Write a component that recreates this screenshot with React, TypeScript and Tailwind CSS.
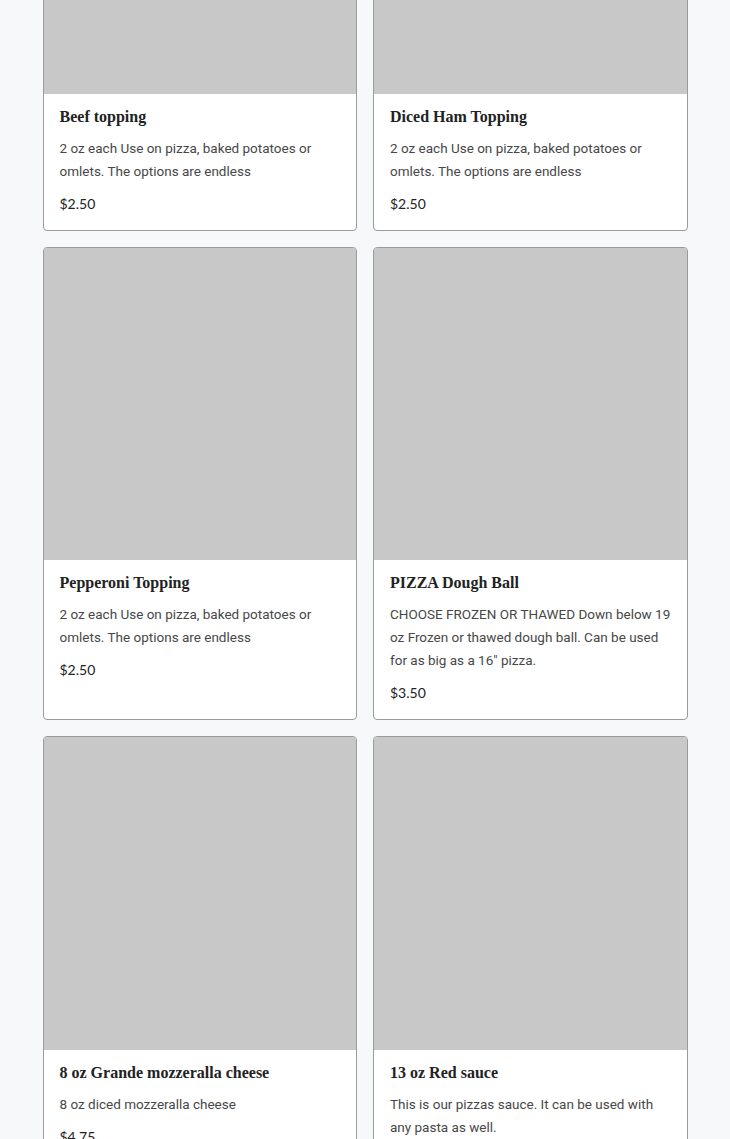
const products = [
  {
    name: "Beef topping",
    description: "2 oz each Use on pizza, baked potatoes or omlets. The options are endless",
    price: "$2.50",
  },
  {
    name: "Diced Ham Topping",
    description: "2 oz each Use on pizza, baked potatoes or omlets. The options are endless",
    price: "$2.50",
  },
  {
    name: "Pepperoni Topping",
    description: "2 oz each Use on pizza, baked potatoes or omlets. The options are endless",
    price: "$2.50",
  },
  {
    name: "PIZZA Dough Ball",
    description:
      'CHOOSE FROZEN OR THAWED Down below 19 oz Frozen or thawed dough ball. Can be used for as big as a 16" pizza.',
    price: "$3.50",
  },
  {
    name: "8 oz Grande mozzeralla cheese",
    description: "8 oz diced mozzeralla cheese",
    price: "$4.75",
  },
  {
    name: "13 oz Red sauce",
    description: "This is our pizzas sauce. It can be used with any pasta as well.",
    price: "$3.00",
  },
]

function ProductCard({ name, description, price }: (typeof products)[number]) {
  return (
    <div className="flex flex-col overflow-hidden rounded-[4px] border border-[#9b9b9b] bg-white">
      <div className="aspect-square w-full bg-[#c8c8c8]" />
      <div className="px-4 pt-3 pb-[15px]">
        <h3 className="font-['Liberation_Serif',serif] text-[16px] leading-[22px] font-bold text-[#222]">
          {name}
        </h3>
        <p className="mt-[9px] font-['Roboto',sans-serif] text-[13.5px] leading-[23px] text-[#474747]">
          {description}
        </p>
        <p className="mt-[9px] text-[14px] leading-[23px] text-[#222]">{price}</p>
      </div>
    </div>
  )
}

export default function App() {
  return (
    <div className="h-[1139px] overflow-hidden bg-[#f7f8f9] font-['Lato',sans-serif]">
      <div className="mx-auto -mt-[220px] grid w-[645px] grid-cols-2 gap-4 pb-8">
        {products.map((p) => (
          <ProductCard key={p.name} {...p} />
        ))}
      </div>
    </div>
  )
}
